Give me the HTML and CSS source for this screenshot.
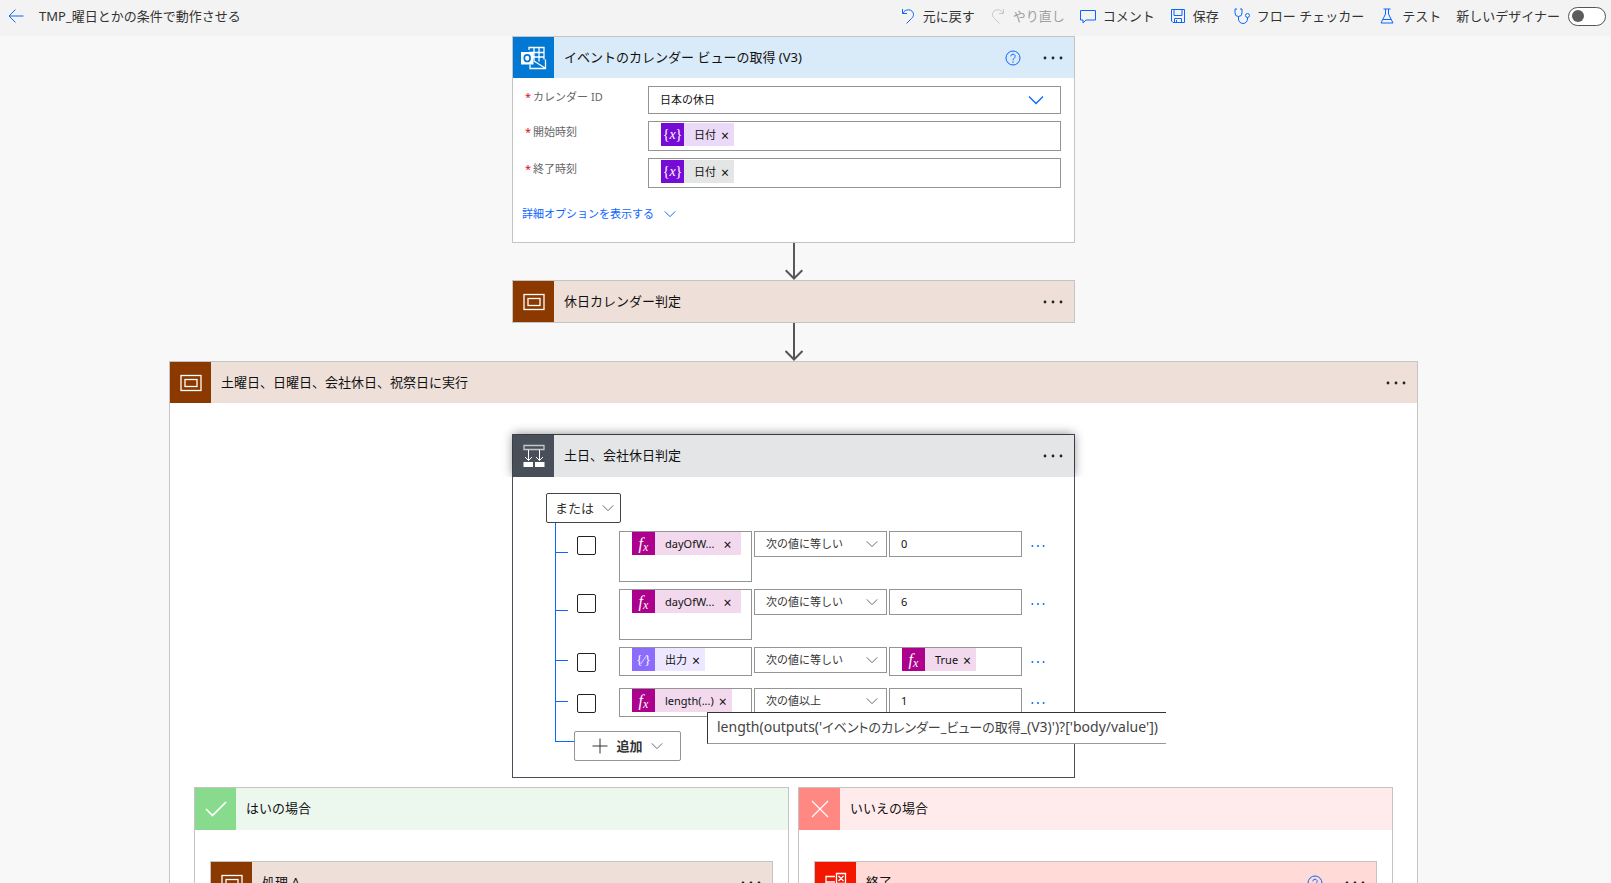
FILE: index.html
```html
<!DOCTYPE html>
<html lang="ja">
<head>
<meta charset="utf-8">
<title>TMP_曜日とかの条件で動作させる</title>
<link rel="stylesheet" href="styles.css">
</head>
<body>
<svg class="defs" aria-hidden="true">
  <symbol id="chev" viewBox="0 0 16 16"><path d="M1 4.500l7 7 7-7" fill="none" stroke="currentColor" stroke-width="1.300"/></symbol>
  <symbol id="dots" viewBox="0 0 20 4"><circle cx="2" cy="2" r="1.400"/><circle cx="10" cy="2" r="1.400"/><circle cx="18" cy="2" r="1.400"/></symbol>
  <symbol id="help" viewBox="0 0 16 16"><g fill="none" stroke="currentColor"><circle cx="8" cy="8" r="7"/><path d="M5.800 6.300a2.200 2.200 0 1 1 3.300 2C8.300 8.800 8 9.200 8 10.200"/></g><circle cx="8" cy="12" r=".7" fill="currentColor"/></symbol>
  <symbol id="scope" viewBox="0 0 22 18"><g fill="none" stroke="#fff"><rect x="1" y="1.500" width="20" height="15" stroke-width="1.300"/><rect x="5" y="5.500" width="12" height="7" stroke-width="1.300"/></g></symbol>
  <symbol id="arrow" viewBox="0 0 20 38"><path d="M10 0v36.500M1.500 28L10 36.500l8.500-8.500" fill="none" stroke="#555" stroke-width="2"/></symbol>
</svg>
<div class="app">
<header class="topbar">
  <button class="back" aria-label="戻る"><svg width="16" height="16" viewBox="0 0 16 16"><path d="M15.500 8H1M7.500 1.500L1 8l6.500 6.500" fill="none" stroke="currentColor"/></svg></button>
  <h1 class="flow-name">TMP_曜日とかの条件で動作させる</h1>
  <nav class="commands">
    <button class="cmd"><svg viewBox="0 0 16 16"><path d="M2.500 1v4.500H7M2.500 5.500C4 3 6 1.800 8.500 1.800C11.500 1.800 13.500 4 13.500 6.500C13.500 8.500 12.500 9.500 11.500 10.500L6.500 15.500"/></svg>元に戻す</button>
    <button class="cmd" disabled><svg viewBox="0 0 16 16"><path d="M13.500 1v4.500H9M13.500 5.500C12 3 10 1.800 7.500 1.800C4.500 1.800 2.500 4 2.500 6.500C2.500 8.500 3.500 9.500 4.500 10.500L9.500 15.500"/></svg>やり直し</button>
    <button class="cmd"><svg viewBox="0 0 16 16"><path d="M.5 2.500h15v9.500H6l-3 3v-3H.5z"/></svg>コメント</button>
    <button class="cmd"><svg viewBox="0 0 16 16"><path d="M1.500 1.500h13v13H3l-1.500-1.500zM4 1.500v6h8v-6M4.500 14.500v-4h7v4M6.500 12v2.500"/></svg>保存</button>
    <button class="cmd"><svg viewBox="0 0 16 16"><path d="M3 1H1v4a3.500 3.500 0 0 0 7 0V1H6M4.500 8.500V11a4.500 4.500 0 0 0 9 0V9.500"/><circle cx="13.500" cy="7.500" r="2"/></svg>フロー チェッカー</button>
    <button class="cmd"><svg viewBox="0 0 16 16"><path d="M4.500 1h7M6.500 1v5L2 15h12L9.500 6V1M4 11.500h8"/></svg>テスト</button>
    <label class="designer">新しいデザイナー<input type="checkbox" class="toggle" role="switch"></label>
  </nav>
</header>
<main class="canvas">
  <section class="card action">
    <div class="head blue">
      <span class="tile outlook"><svg width="28" height="24" viewBox="0 0 28 24"><g fill="none" stroke="#fff" stroke-width="1.300"><path d="M9 4V1.500h15v12M9 6.500h15M14 1.500v13M19 1.500v14M12 11h12M10 18.500v4h15.500V13.500M14 15l11 7"/></g><rect x="1" y="6" width="12.500" height="12.500" fill="#fff"/><ellipse cx="7.200" cy="12.200" rx="2.900" ry="3.300" fill="none" stroke="#0078d4" stroke-width="1.700"/></svg></span>
      <h2>イベントのカレンダー ビューの取得 (V3)</h2>
      <button class="helpbtn" aria-label="ヘルプ"><svg width="16" height="16"><use href="#help"/></svg></button>
      <button class="more" aria-label="その他"><svg width="20" height="4"><use href="#dots"/></svg></button>
    </div>
    <div class="params">
      <span class="plabel"><i>*</i>カレンダー ID</span>
      <button class="field combo">日本の休日<svg width="16" height="16"><use href="#chev"/></svg></button>
      <span class="plabel"><i>*</i>開始時刻</span>
      <div class="field tall"><span class="token var"><b>{<em>x</em>}</b>日付<button aria-label="削除">×</button></span></div>
      <span class="plabel"><i>*</i>終了時刻</span>
      <div class="field tall"><span class="token var idle"><b>{<em>x</em>}</b>日付<button aria-label="削除">×</button></span></div>
    </div>
    <button class="advanced">詳細オプションを表示する<svg width="12" height="12"><use href="#chev"/></svg></button>
  </section>
  <svg class="arrow" width="20" height="37"><use href="#arrow"/></svg>
  <section class="card">
    <div class="head brown"><span class="tile"><svg width="22" height="18"><use href="#scope"/></svg></span><h2>休日カレンダー判定</h2>
      <button class="more" aria-label="その他"><svg width="20" height="4"><use href="#dots"/></svg></button></div>
  </section>
  <svg class="arrow" width="20" height="38"><use href="#arrow"/></svg>
  <section class="card scope">
    <div class="head brown"><span class="tile"><svg width="22" height="18"><use href="#scope"/></svg></span><h2>土曜日、日曜日、会社休日、祝祭日に実行</h2>
      <button class="more" aria-label="その他"><svg width="20" height="4"><use href="#dots"/></svg></button></div>
    <div class="scope-body">
      <section class="card cond">
        <div class="head slate"><span class="tile"><svg width="22" height="24" viewBox="0 0 22 24"><g fill="none" stroke="#fff"><path d="M1 1.500h20v4H1z" stroke="#c4c7cb" stroke-width="1.300"/><path d="M5.500 6v10.500M16.500 6v10.500M2 13l3.500 3.500L9 13M13 13l3.500 3.500L20 13"/></g><path d="M.5 18h9.500v5H.5zM12 18h9.500v5H12z" fill="#fff"/></svg></span><h2>土日、会社休日判定</h2>
          <button class="more" aria-label="その他"><svg width="20" height="4"><use href="#dots"/></svg></button></div>
        <div class="cond-body">
          <button class="group-op">または<svg width="12" height="12"><use href="#chev"/></svg></button>
          <div class="tree">
            <div class="rule two">
              <input type="checkbox" class="pick" aria-label="行 1">
              <div class="cell"><span class="token fx wide"><b><em>f<sub>x</sub></em></b>dayOfW...<button aria-label="削除">×</button></span></div>
              <button class="cell op">次の値に等しい<svg width="12" height="12"><use href="#chev"/></svg></button>
              <input class="cell val" value="0" aria-label="値 1">
              <button class="rmore" aria-label="その他"><svg width="14" height="4"><use href="#dots"/></svg></button>
            </div>
            <div class="rule two">
              <input type="checkbox" class="pick" aria-label="行 2">
              <div class="cell"><span class="token fx wide"><b><em>f<sub>x</sub></em></b>dayOfW...<button aria-label="削除">×</button></span></div>
              <button class="cell op">次の値に等しい<svg width="12" height="12"><use href="#chev"/></svg></button>
              <input class="cell val" value="6" aria-label="値 2">
              <button class="rmore" aria-label="その他"><svg width="14" height="4"><use href="#dots"/></svg></button>
            </div>
            <div class="rule">
              <input type="checkbox" class="pick" aria-label="行 3">
              <div class="cell"><span class="token out"><b>{<em>∕</em>}</b>出力<button aria-label="削除">×</button></span></div>
              <button class="cell op">次の値に等しい<svg width="12" height="12"><use href="#chev"/></svg></button>
              <div class="cell"><span class="token fx"><b><em>f<sub>x</sub></em></b>True<button aria-label="削除">×</button></span></div>
              <button class="rmore" aria-label="その他"><svg width="14" height="4"><use href="#dots"/></svg></button>
            </div>
            <div class="rule last">
              <input type="checkbox" class="pick" aria-label="行 4">
              <div class="cell"><span class="token fx"><b><em>f<sub>x</sub></em></b>length(...)<button aria-label="削除">×</button></span>
                <div class="tip" role="tooltip">length(outputs('<span>イベントのカレンダー_ビューの取得</span>_(V3)')?['body/value'])</div></div>
              <button class="cell op">次の値以上<svg width="12" height="12"><use href="#chev"/></svg></button>
              <input class="cell val" value="1" aria-label="値 4">
              <button class="rmore" aria-label="その他"><svg width="14" height="4"><use href="#dots"/></svg></button>
            </div>
          </div>
          <div class="tail"><button class="add"><svg width="16" height="16" viewBox="0 0 16 16"><path d="M8 .5v15M.5 8h15" fill="none" stroke="currentColor"/></svg>追加<svg class="thin" width="12" height="12"><use href="#chev"/></svg></button></div>
        </div>
      </section>
      <div class="branches">
        <section class="branch">
          <div class="head green"><span class="tile"><svg width="22" height="16" viewBox="0 0 22 16"><path d="M1 8l6.500 6.500L21 1" fill="none" stroke="#fff" stroke-width="1.700"/></svg></span><h2>はいの場合</h2></div>
          <section class="card inner"><div class="head brown"><span class="tile"><svg width="22" height="18"><use href="#scope"/></svg></span><h2>処理 A</h2>
            <button class="more" aria-label="その他"><svg width="20" height="4"><use href="#dots"/></svg></button></div></section>
        </section>
        <section class="branch">
          <div class="head pink"><span class="tile"><svg width="18" height="18" viewBox="0 0 18 18"><path d="M1 1l16 16M17 1L1 17" fill="none" stroke="#fff" stroke-width="1.200"/></svg></span><h2>いいえの場合</h2></div>
          <section class="card inner"><div class="head red"><span class="tile"><svg width="22" height="22" viewBox="0 0 22 22"><path d="M10 4.500H1v16M1 10h9M11.500 1.500h9v10h-9zM13.500 4l5 5M18.500 4l-5 5M1 15.500h15v-4" fill="none" stroke="#fff" stroke-width="1.300"/></svg></span><h2>終了</h2>
            <button class="helpbtn" aria-label="ヘルプ"><svg width="16" height="16"><use href="#help"/></svg></button>
            <button class="more" aria-label="その他"><svg width="20" height="4"><use href="#dots"/></svg></button></div></section>
        </section>
      </div>
    </div>
  </section>
</main>
</div>
</body>
</html>
```
FILE: styles.css
```css
*{box-sizing:border-box}
body{margin:0;background:#f8f8f8;color:#111;font:13px/20px "Noto Sans","Noto Sans CJK JP",sans-serif}
button,input{font:inherit;color:inherit;margin:0;padding:0;border:0;background:none;border-radius:0}
h1,h2{margin:0;font-size:13px;font-weight:400;white-space:nowrap}
svg{display:block;flex:none}
.defs{position:absolute;width:0;height:0}
.app{height:100vh;display:flex;flex-direction:column;overflow:hidden}
.topbar{flex:none;display:flex;align-items:center;height:36px;padding:0 5px 4px 8px;background:#f3f3f3;color:#333}
.back{color:#0b66ff;margin-right:15px}
.commands{margin-left:auto;display:flex;gap:15px}
.cmd,.designer{display:flex;align-items:center;gap:7px;white-space:nowrap}
.designer{gap:8px}
.cmd svg{width:16px;height:16px;fill:none;stroke:#0b66ff}
.cmd:disabled{color:#a0a0a0}
.cmd:disabled svg{stroke:#c8c8c8}
.toggle{appearance:none;width:38px;height:19px;border:1px solid #555;border-radius:10px;background:#fff;display:flex;align-items:center;padding-left:3px}
.toggle::before{content:"";width:12px;height:12px;border-radius:50%;background:#5c5c5c}
.canvas{flex:1;min-height:0;overflow:hidden;display:flex;flex-direction:column;align-items:center;padding-right:24px}
.canvas>*{flex:none}
.card{width:563px;max-width:100%;border:1px solid #c4c4c4;background:#fff}
.head{display:flex;align-items:center;height:41px;padding-right:11px}
.head h2{margin-left:10px;padding-bottom:2px}
.tile{align-self:stretch;flex:none;width:41px;display:flex;align-items:center;justify-content:center}
.more{margin-left:auto;height:20px;fill:#222}
.helpbtn{margin-left:auto;color:#0b66ff}
.helpbtn + .more{margin-left:22px}
.blue{background:#d9eaf8}.blue .tile{background:#0078d4}
.brown{background:#eee0d9}.brown .tile{background:#8c3900}
.slate{background:#e4e5e7;height:42px}.slate .tile{background:#484f58}
.green{background:#ecf7ee}.green .tile{background:#88da8d}
.pink{background:#ffebeb}.pink .tile{background:#ff8882}
.red{background:#ffdad7}.red .tile{background:#f41700}
.params{display:grid;grid-template-columns:123px 1fr;row-gap:7px;padding:8px 13px 0 12px;font-size:11px}
.plabel{color:#666;padding-top:1px}
.plabel i{font-style:normal;color:#e00b1c;margin-right:2px}
.field{border:1px solid #949494;height:28px;padding:0 16px 0 11px;display:flex;align-items:center}
.combo{justify-content:space-between}
.combo svg{color:#0b66ff}
.tall{height:30px;align-items:flex-start;padding:1px 12px 0}
.token{display:flex;align-items:center;height:23px;padding-right:4px;font-size:11px;white-space:nowrap;color:#111}
.token b{width:23px;height:23px;margin-right:10px;display:flex;align-items:center;justify-content:center;color:#fff;font:14px/20px "Liberation Serif",serif}
.token em{font-style:italic}
.token sub{font-size:12px;vertical-align:-2px;line-height:10px}
.token button{margin-left:4px;width:10px;font-size:14px;line-height:23px;padding-top:2px}
.wide button{margin:0 5px 0 8px}
.var{background:#ebdaf7}.var b{background:#770bd6}
.idle{background:#e4e6e5}
.fx{background:#f2d9ee}.fx b{background:#ad008c;font-size:16px}
.out{background:#ede8ff}.out b{background:#8c6cff;font-size:13px}
.advanced{display:flex;align-items:center;gap:10px;margin:16px 9px 18px;color:#0b66ff;font-size:11px;line-height:20px}
.scope{width:1249px}
.scope-body{padding:31px 24px 0;display:flex;flex-direction:column;align-items:center}
.cond{border-color:#484f58}
.cond .head{box-shadow:0 -1px 10px rgba(0,0,0,.45);clip-path:inset(-14px -14px 0 -14px)}
.cond-body{padding:16px 28px 16px 33px;background:#fff}
.group-op{display:flex;align-items:center;justify-content:space-between;width:75px;height:30px;padding:0 6px 0 8px;border:1px solid #444;border-radius:2px;color:#333}
.group-op svg,.op svg,.thin{color:#666}
.tree{margin-left:9px;padding-top:8px;border-left:1px solid #0b66ff}
.rule{display:grid;grid-template-columns:12px 51px 133px 135px 135px 24px;align-items:start;margin-bottom:12px}
.rule::before{content:"";height:1px;background:#0b66ff;margin-top:13px}
.pick{appearance:none;width:19px;height:19px;border:1px solid #222;border-radius:2px;background:#fff;margin:6px 0 0 9px}
.two{margin-bottom:7px}
.two::before{margin-top:21px}
.two .pick{margin-top:5px}
.cell{position:relative;height:29px;border:1px solid #949494;padding:0 12px;display:flex;align-items:flex-start;background:#fff;width:133px}
.two > div.cell{height:51px}
.op,.val{height:26px;font-size:11px}
.op,.rule .val,.op + .cell{margin-left:2px}
.op{align-items:center;justify-content:space-between;padding:0 8px 0 11px;color:#333}
.val{padding:0 11px 2px}
.rmore{fill:#0b66ff;height:29px;padding-left:9px}
.tip{position:absolute;z-index:2;left:87px;top:23px;height:32px;width:459px;padding:0 9px;background:#fff;border:1px solid #333;border-right:0;border-bottom-color:#999;font-size:14px;line-height:28px;color:#444;white-space:nowrap;font-feature-settings:"palt"}
.tip span{font-size:13px}
.last{margin-bottom:0}
.tail{display:flex;margin-left:9px}
.tail::before{content:"";width:18px;height:24px;border:solid #0b66ff;border-width:0 0 1px 1px}
.add{display:flex;align-items:center;justify-content:center;gap:8px;width:107px;height:30px;margin-top:14px;border:1px solid #949494;border-radius:2px;background:#fff;font-weight:700;color:#333}
.branches{display:grid;grid-template-columns:1fr 1fr;gap:9px;align-self:stretch;margin-top:9px}
.branch{border:1px solid #c4c4c4;background:#fff;padding-bottom:40px}
.branch .head{height:42px}
.inner{margin:31px 15px 0}
```
